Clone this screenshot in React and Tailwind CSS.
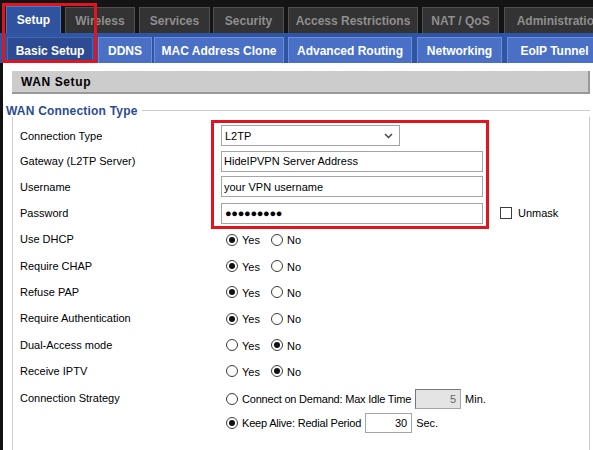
import React from 'react';

const font = { fontFamily: '"Liberation Sans", Arial, sans-serif' };

const topTabs = [
  { label: 'Setup', cls: 'ml-[6px] w-[55px]', active: true },
  { label: 'Wireless', cls: 'ml-[4px] w-[70px]' },
  { label: 'Services', cls: 'ml-[4px] w-[71px]' },
  { label: 'Security', cls: 'ml-[3px] w-[71px]' },
  { label: 'Access Restrictions', cls: 'ml-[4px] w-[130px]' },
  { label: 'NAT / QoS', cls: 'ml-[4px] w-[77px]' },
  { label: 'Administration', cls: 'ml-[5px] w-[110px]' },
];

const subTabs = [
  { label: 'Basic Setup', cls: 'ml-[7px] w-[86px]', active: true },
  { label: 'DDNS', cls: 'ml-[5px] w-[54px]' },
  { label: 'MAC Address Clone', cls: 'ml-[2px] w-[130px]' },
  { label: 'Advanced Routing', cls: 'ml-[4px] w-[124px]' },
  { label: 'Networking', cls: 'ml-[5px] w-[85px]' },
  { label: 'EoIP Tunnel', cls: 'ml-[5px] w-[95px]' },
];

function Radio({ on }) {
  return (
    <span className="w-[12px] h-[12px] rounded-full border border-[#3c3c3c] bg-white flex items-center justify-center shrink-0">
      {on && <span className="w-[6px] h-[6px] rounded-full bg-[#111]" />}
    </span>
  );
}

function YesNo({ yes = true }) {
  return (
    <div className="flex items-center pl-[5px]">
      <Radio on={yes} />
      <span className="ml-[4px] w-[29px] pt-[2px]">Yes</span>
      <Radio on={!yes} />
      <span className="ml-[4px] pt-[2px]">No</span>
    </div>
  );
}

function Row({ label, children, h = 'h-[26.3px]' }) {
  return (
    <div className={`flex items-center ${h}`}>
      <div className="w-[208px] pl-[7px] shrink-0">{label}</div>
      <div className="flex items-center flex-1">{children}</div>
    </div>
  );
}

const inputCls = 'h-[21px] border border-[#a5a5a5] bg-white flex items-center px-[2px]';

export default function App() {
  return (
    <div className="relative w-[593px] h-[450px] overflow-hidden bg-white text-[11px] text-black" style={font}>
      {/* top tab bar */}
      <div className="h-[33px] bg-[#141414] flex items-end">
        {topTabs.map((t) => (
          <div
            key={t.label}
            className={`${t.cls} shrink-0 flex items-center justify-center font-bold text-[12px] border-t border-l border-r ${
              t.active
                ? 'h-[27px] bg-[#30539f] border-[#5475c2] text-white'
                : 'h-[26px] bg-[#333333] border-[#505050] text-[#8e8e8e]'
            }`}
          >
            {t.label}
          </div>
        ))}
      </div>

      {/* sub tab bar */}
      <div className="h-[30px] bg-[#2f55a5] flex items-end">
        {subTabs.map((t) => (
          <div
            key={t.label}
            className={`${t.cls} h-[26px] shrink-0 flex items-center justify-center font-bold text-[12px] text-white border-t border-l border-r ${
              t.active ? 'bg-[#2d4b92] border-[#4766b0]' : 'bg-[#4a70c6] border-[#6d8edb]'
            }`}
          >
            {t.label}
          </div>
        ))}
      </div>

      {/* content */}
      <div className="h-[387px] border-l-[3px] border-[#111] pt-[8px]">
        <div className="ml-[9px] mr-[3px] h-[23px] bg-[#cccccc] border-r-2 border-b-2 border-[#999] flex items-center pl-[9px] font-bold text-[12px] tracking-[0.6px]">
          WAN Setup
        </div>

        <div className="mt-[10px] flex items-center h-[13px]">
          <span className="ml-[3px] font-bold text-[12px] text-[#2c4c91] tracking-[0.2px]">WAN Connection Type</span>
          <div className="ml-[4px] flex-1 h-px bg-[#cccccc] mr-[3px]" />
        </div>

        <div className="ml-[9px] mr-[3px] h-[334px] border-l border-r border-b border-[#cccccc] pt-[6px]">
          <Row label="Connection Type" h="h-[25.5px]">
            <div className={`${inputCls} w-[179px] justify-between pl-[3px] pr-[6px]`}>
              <span>L2TP</span>
              <svg width="9" height="6" viewBox="0 0 9 6">
                <path d="M1 1l3.5 3.5L8 1" fill="none" stroke="#444" strokeWidth="1.5" />
              </svg>
            </div>
          </Row>
          <Row label="Gateway (L2TP Server)" h="h-[25.5px]">
            <div className={`${inputCls} w-[262px]`}>HideIPVPN Server Address</div>
          </Row>
          <Row label="Username" h="h-[25.5px]">
            <div className={`${inputCls} w-[262px]`}>your VPN username</div>
          </Row>
          <Row label="Password" h="h-[27px]">
            <div className={`${inputCls} w-[262px] pl-[3px] text-[11px] tracking-[-0.3px]`}>●●●●●●●●●</div>
            <span className="ml-[17px] w-[12px] h-[12px] border border-[#3c3c3c] bg-white shrink-0" />
            <span className="ml-[6px]">Unmask</span>
          </Row>
          <Row label="Use DHCP"><YesNo /></Row>
          <Row label="Require CHAP"><YesNo /></Row>
          <Row label="Refuse PAP"><YesNo /></Row>
          <Row label="Require Authentication"><YesNo /></Row>
          <Row label="Dual-Access mode"><YesNo yes={false} /></Row>
          <Row label="Receive IPTV"><YesNo yes={false} /></Row>
          <Row label="Connection Strategy" h="h-[27.5px]">
            <div className="flex items-center pl-[5px] pt-[2px]">
              <Radio />
              <span className="ml-[4px] tracking-[-0.2px]">Connect on Demand: Max Idle Time</span>
              <div className="ml-[4px] w-[46px] h-[20px] bg-[#e4e4e4] border border-[#a5a5a5] border-l-[#777] border-t-[#777] flex items-center justify-end pr-[4px] text-[#666]">5</div>
              <span className="ml-[4px]">Min.</span>
            </div>
          </Row>
          <Row label="" h="h-[22px]">
            <div className="flex items-center pl-[5px]">
              <Radio on />
              <span className="ml-[4px] tracking-[-0.2px]">Keep Alive: Redial Period</span>
              <div className="ml-[4px] w-[47px] h-[20px] bg-white border border-[#a5a5a5] flex items-center justify-end pr-[4px]">30</div>
              <span className="ml-[4px]">Sec.</span>
            </div>
          </Row>
        </div>
      </div>

      {/* annotation boxes */}
      <div className="absolute left-[2px] top-[3px] w-[95px] h-[60px] border-[3px] border-[#e3141e] pointer-events-none" />
      <div className="absolute left-[211px] top-[120px] w-[278px] h-[109px] border-[3px] border-[#e3141e] pointer-events-none" />
    </div>
  );
}
